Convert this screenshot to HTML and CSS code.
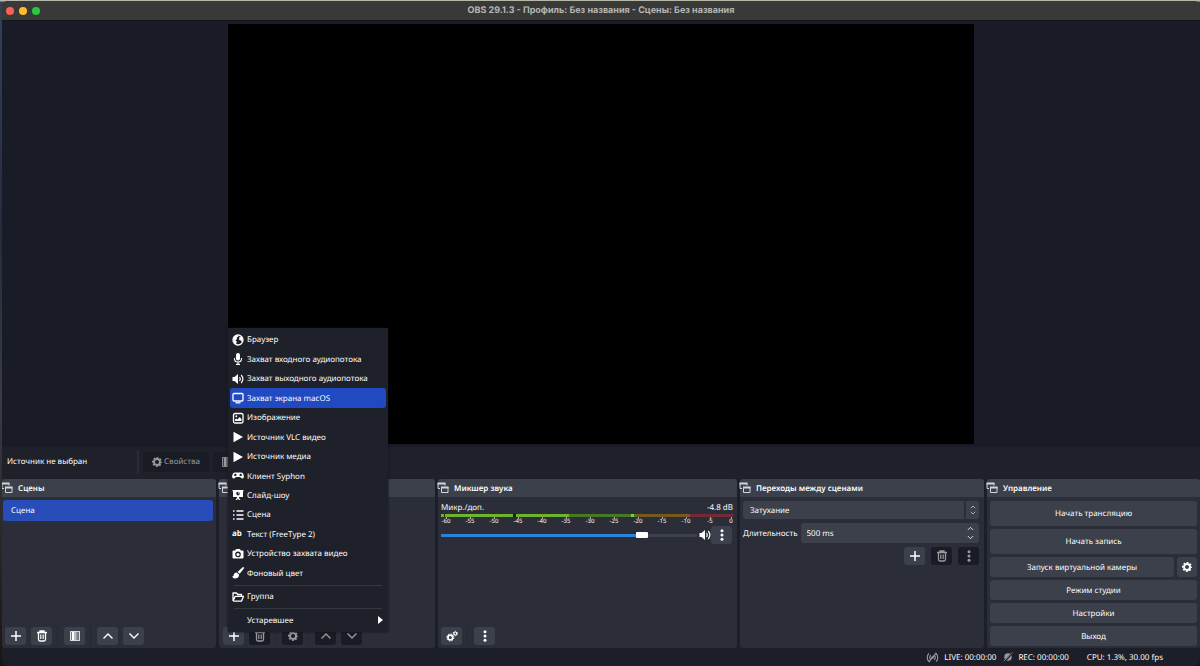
FILE: index.html
```html
<!DOCTYPE html>
<html lang="ru">
<head>
<meta charset="utf-8">
<title>OBS 29.1.3 - Профиль: Без названия - Сцены: Без названия</title>
<link rel="stylesheet" href="styles.css">
</head>
<body>
<svg class="sprite" aria-hidden="true">
  <symbol id="dock" viewBox="0 0 12 12"><path d="M1 6.500V1.500H8V3.500M1 6.500H3" fill="none" stroke="currentColor"/><path d="M.5 1.500H8.500M4 5.500H11.500" stroke="currentColor" stroke-width="2"/><path d="M4.500 5V10.500H11V5" fill="none" stroke="currentColor"/></symbol>
  <symbol id="plus" viewBox="0 0 12 12"><path d="M6 1V11M1 6H11" stroke="currentColor" stroke-width="1.500" fill="none"/></symbol>
  <symbol id="trash" viewBox="0 0 12 12"><path d="M1 2.500H11M4 2V1H8V2M2.500 3V9.500Q2.500 11 4 11H8Q9.500 11 9.500 9.500V3" stroke="currentColor" stroke-width="1.300" fill="none"/><path d="M4.500 4.500V9M6 4.500V9M7.500 4.500V9" stroke="currentColor" stroke-width=".8"/></symbol>
  <symbol id="filter" viewBox="0 0 12 12"><path d="M1 1H11V11H1Z" fill="currentColor" opacity=".3"/><path d="M1.500 1.500H10.500V10.500H1.500Z" fill="none" stroke="currentColor" opacity=".75"/><path d="M3 2H5V10H3Z" fill="currentColor"/><path d="M5 2H7V10H5Z" fill="currentColor" opacity=".5"/><path d="M7 2H8V10H7Z" fill="currentColor" opacity=".25"/></symbol>
  <symbol id="up" viewBox="0 0 12 12"><path d="M1.500 8.500L6 4L10.500 8.500" stroke="currentColor" stroke-width="1.400" fill="none"/></symbol>
  <symbol id="down" viewBox="0 0 12 12"><path d="M1.500 3.500L6 8L10.500 3.500" stroke="currentColor" stroke-width="1.400" fill="none"/></symbol>
  <symbol id="gear" viewBox="0 0 12 12"><circle cx="6" cy="6" r="3" fill="none" stroke="currentColor" stroke-width="1.900"/><circle cx="6" cy="6" r="4.300" fill="none" stroke="currentColor" stroke-width="1.400" stroke-dasharray="1.900 1.477" stroke-dashoffset=".95"/></symbol>
  <symbol id="gears" viewBox="0 0 12 12"><circle cx="4.300" cy="7.500" r="2.400" fill="none" stroke="currentColor" stroke-width="1.700"/><circle cx="4.300" cy="7.500" r="3.500" fill="none" stroke="currentColor" stroke-width="1" stroke-dasharray="1.400 1.350"/><circle cx="9.300" cy="3.500" r="1.500" fill="none" stroke="currentColor" stroke-width="1.200"/><circle cx="9.300" cy="3.500" r="2.200" fill="none" stroke="currentColor" stroke-width=".8" stroke-dasharray="1.100 1.100"/></symbol>
  <symbol id="dots" viewBox="0 0 12 12"><circle cx="6" cy="1.800" r="1.500" fill="currentColor"/><circle cx="6" cy="6" r="1.500" fill="currentColor"/><circle cx="6" cy="10.200" r="1.500" fill="currentColor"/></symbol>
  <symbol id="globe" viewBox="0 0 12 12"><circle cx="6" cy="6" r="5" fill="none" stroke="currentColor" stroke-width="1.300"/><path d="M1.500 3Q3 1 6 1.200L6.500 2.500L4.800 3.500L5 5L3.600 6.200L4.800 7.500L4 10.500Q1 9 1.500 3ZM7.500 2.800L10 3L11 6Q10.500 7.500 9.500 8L9 6.500L7 5.800Z" fill="currentColor"/></symbol>
  <symbol id="mic" viewBox="0 0 12 12"><rect x="4" y="0" width="4" height="7.500" rx="2" fill="currentColor"/><path d="M2.500 5V6Q2.500 9 6 9T9.500 6V5M6 9V11M4 11.400H8" fill="none" stroke="currentColor" stroke-width="1.100"/></symbol>
  <symbol id="sound" viewBox="0 0 12 12"><path d="M.5 4V8H2.500L6 11V1L2.500 4Z" fill="currentColor"/><path d="M7.500 4Q9 6 7.500 8M9.200 2Q12.500 6 9.200 10" fill="none" stroke="currentColor" stroke-width="1.200"/></symbol>
  <symbol id="monitor" viewBox="0 0 12 12"><rect x="1" y="1.500" width="10" height="7.500" rx="1" fill="none" stroke="currentColor" stroke-width="1.300"/><path d="M3.500 10.800H8.500" stroke="currentColor" stroke-width="1.300"/></symbol>
  <symbol id="image" viewBox="0 0 12 12"><rect x="1.500" y="1.500" width="9.500" height="9.500" rx="1.500" fill="none" stroke="currentColor" stroke-width="1.300"/><circle cx="4.300" cy="4.300" r="1" fill="currentColor"/><path d="M3 9V7.500L4.500 6.500L5.500 7.500L7.500 5L9.500 7V9Z" fill="currentColor"/></symbol>
  <symbol id="play" viewBox="0 0 12 12"><path d="M1.500 .8L11 6L1.500 11.200Z" fill="currentColor"/></symbol>
  <symbol id="gamepad" viewBox="0 0 12 12"><path fill-rule="evenodd" d="M3 2.500H9Q11.500 2.500 11.900 6.500Q11.800 9 10 8.500L8 7H4L2 8.500Q.2 9 .1 6.500Q.5 2.500 3 2.500ZM3.300 3.700A1.200 1.200 0 1 0 3.310 6.100A1.200 1.200 0 1 0 3.300 3.700ZM8.700 3.700A1.200 1.200 0 1 0 8.710 6.100A1.200 1.200 0 1 0 8.700 3.700Z" fill="currentColor"/></symbol>
  <symbol id="slides" viewBox="0 0 12 12"><path fill-rule="evenodd" d="M.5 1H11.500V2.200H11V8H7V9L8.500 11H7L6 9.700L5 11H3.500L5 9V8H1V2.200H.5ZM6 2.800A1.800 1.800 0 1 0 6.010 6.400A1.800 1.800 0 1 0 6 2.800Z" fill="currentColor"/><path d="M6 4.600V3.200A1.400 1.400 0 0 1 7.400 4.600Z" fill="currentColor"/></symbol>
  <symbol id="list" viewBox="0 0 12 12"><path d="M1 2H2.500M1 6H2.500M1 10H2.500M4.500 2H11.500M4.500 6H11.500M4.500 10H11.500" stroke="currentColor" stroke-width="1.400"/></symbol>
  <symbol id="camera" viewBox="0 0 12 12"><path fill-rule="evenodd" d="M1.500 2.500H3.300L4 1H8L8.700 2.500H10.500Q11.500 2.500 11.500 3.500V9.500Q11.500 10.500 10.500 10.500H1.500Q.5 10.500 .5 9.500V3.500Q.5 2.500 1.500 2.500ZM6 3.600A2.800 2.800 0 1 0 6.010 9.200A2.800 2.800 0 1 0 6 3.600Z" fill="currentColor"/><circle cx="6" cy="6.400" r="1.500" fill="currentColor"/></symbol>
  <symbol id="brush" viewBox="0 0 12 12"><path d="M11.800 .3Q12.300 1 11.500 2L7.700 6.800L5.500 4.900L10.300 .6Q11.200 -.2 11.800 .3ZM4.700 5.500L7 7.600Q7.300 11.500 3 11.500Q.5 11.500 .3 9.300L1.500 9Q1.600 5.500 4.700 5.500Z" fill="currentColor"/></symbol>
  <symbol id="folder" viewBox="0 0 12 12"><path d="M1 10V2H4.500L5.700 3.500H9.500V5M1 10L3.200 5.300H11.500L9.500 10.200H1.200" fill="none" stroke="currentColor" stroke-width="1.300" stroke-linejoin="round"/></symbol>
  <symbol id="live" viewBox="0 0 14 12"><path d="M3 1.500Q-.5 6 3 10.500M5 3.500Q3 6 5 8.500M11 1.500Q14.500 6 11 10.500M9 3.500Q11 6 9 8.500M3 11L11 1" fill="none" stroke="currentColor" stroke-width="1.200"/><circle cx="7" cy="6" r="1.300" fill="currentColor"/></symbol>
  <symbol id="rec" viewBox="0 0 12 12"><circle cx="6" cy="6" r="4.500" fill="currentColor"/><path d="M1.500 11.500L11.500 1" stroke="#1d1f28" stroke-width="2.400"/><path d="M1 11L11.200 .5" stroke="currentColor"/></symbol>
</svg>

<div class="app">
  <header class="titlebar">
    <div class="lights"><span class="light red"></span><span class="light yellow"></span><span class="light green"></span></div>
    <h1>OBS 29.1.3 - Профиль: Без названия - Сцены: Без названия</h1>
  </header>

  <main class="preview"><div class="canvas"></div></main>

  <section class="context">
    <span class="context-name">Источник не выбран</span>
    <button class="ghost" disabled><svg class="icon"><use href="#gear"/></svg>Свойства</button>
    <button class="ghost" disabled aria-label="Фильтры"><svg class="icon"><use href="#filter"/></svg></button>
  </section>

  <div class="docks">
    <section class="dock">
      <h2><svg class="icon"><use href="#dock"/></svg>Сцены</h2>
      <ul class="scenes"><li>Сцена</li></ul>
      <div class="tools">
        <button class="tool" aria-label="Добавить"><svg class="icon"><use href="#plus"/></svg></button>
        <button class="tool" aria-label="Удалить"><svg class="icon"><use href="#trash"/></svg></button>
        <i class="split"></i>
        <button class="tool" aria-label="Фильтры"><svg class="icon"><use href="#filter"/></svg></button>
        <i class="split"></i>
        <button class="tool" aria-label="Вверх"><svg class="icon"><use href="#up"/></svg></button>
        <button class="tool" aria-label="Вниз"><svg class="icon"><use href="#down"/></svg></button>
      </div>
    </section>

    <section class="dock sources">
      <h2><svg class="icon"><use href="#dock"/></svg></h2>
      <div class="tools">
        <button class="tool" aria-label="Добавить источник"><svg class="icon"><use href="#plus"/></svg></button>
        <button class="tool" disabled aria-label="Удалить источник"><svg class="icon"><use href="#trash"/></svg></button>
        <i class="split"></i>
        <button class="tool" disabled aria-label="Свойства источника"><svg class="icon"><use href="#gear"/></svg></button>
        <i class="split"></i>
        <button class="tool" disabled aria-label="Вверх"><svg class="icon"><use href="#up"/></svg></button>
        <button class="tool" disabled aria-label="Вниз"><svg class="icon"><use href="#down"/></svg></button>
      </div>
      <ul class="menu">
        <li><button><svg class="icon"><use href="#globe"/></svg>Браузер</button></li>
        <li><button><svg class="icon"><use href="#mic"/></svg>Захват входного аудиопотока</button></li>
        <li><button><svg class="icon"><use href="#sound"/></svg>Захват выходного аудиопотока</button></li>
        <li><button class="active"><svg class="icon"><use href="#monitor"/></svg>Захват экрана macOS</button></li>
        <li><button><svg class="icon"><use href="#image"/></svg>Изображение</button></li>
        <li><button><svg class="icon"><use href="#play"/></svg>Источник VLC видео</button></li>
        <li><button><svg class="icon"><use href="#play"/></svg>Источник медиа</button></li>
        <li><button><svg class="icon"><use href="#gamepad"/></svg>Клиент Syphon</button></li>
        <li><button><svg class="icon"><use href="#slides"/></svg>Слайд-шоу</button></li>
        <li><button><svg class="icon"><use href="#list"/></svg>Сцена</button></li>
        <li><button><b class="icon ab">ab</b>Текст (FreeType 2)</button></li>
        <li><button><svg class="icon"><use href="#camera"/></svg>Устройство захвата видео</button></li>
        <li><button><svg class="icon"><use href="#brush"/></svg>Фоновый цвет</button></li>
        <li class="rule"></li>
        <li><button><svg class="icon"><use href="#folder"/></svg>Группа</button></li>
        <li class="rule"></li>
        <li><button><span class="icon"></span>Устаревшее<i class="more"></i></button></li>
      </ul>
    </section>

    <section class="dock">
      <h2><svg class="icon"><use href="#dock"/></svg>Микшер звука</h2>
      <div class="mixer">
        <div class="channel"><label for="volume">Микр./доп.</label><span>-4.8 dB</span></div>
        <div class="meter"></div>
        <div class="scale"><span>-60</span><span>-55</span><span>-50</span><span>-45</span><span>-40</span><span>-35</span><span>-30</span><span>-25</span><span>-20</span><span>-15</span><span>-10</span><span>-5</span><span>0</span></div>
        <div class="fader">
          <input id="volume" type="range" min="0" max="100" value="80">
          <button class="mute" aria-label="Заглушить"><svg class="icon"><use href="#sound"/></svg></button>
          <button class="tool" aria-label="Параметры канала"><svg class="icon"><use href="#dots"/></svg></button>
        </div>
      </div>
      <div class="tools">
        <button class="tool" aria-label="Расширенные свойства"><svg class="icon"><use href="#gears"/></svg></button>
        <i class="split"></i>
        <button class="tool" aria-label="Меню микшера"><svg class="icon"><use href="#dots"/></svg></button>
      </div>
    </section>

    <section class="dock">
      <h2><svg class="icon"><use href="#dock"/></svg>Переходы между сценами</h2>
      <div class="transitions">
        <div class="combo">
          <select aria-label="Переход"><option>Затухание</option></select>
          <span class="arrows"><svg><use href="#up"/></svg><svg><use href="#down"/></svg></span>
        </div>
        <div class="duration">
          <label for="duration">Длительность</label>
          <div class="spin"><input id="duration" type="text" value="500 ms">
            <span class="steps"><button aria-label="Больше"><svg><use href="#up"/></svg></button><button aria-label="Меньше"><svg><use href="#down"/></svg></button></span></div>
        </div>
        <div class="actions">
          <button class="tool" aria-label="Добавить переход"><svg class="icon"><use href="#plus"/></svg></button>
          <button class="tool" disabled aria-label="Удалить переход"><svg class="icon"><use href="#trash"/></svg></button>
          <button class="tool" disabled aria-label="Свойства перехода"><svg class="icon"><use href="#dots"/></svg></button>
        </div>
      </div>
    </section>

    <section class="dock last">
      <h2><svg class="icon"><use href="#dock"/></svg>Управление</h2>
      <div class="controls">
        <button class="big">Начать трансляцию</button>
        <button class="big">Начать запись</button>
        <div class="pair"><button>Запуск виртуальной камеры</button><button aria-label="Настройка камеры"><svg class="icon"><use href="#gear"/></svg></button></div>
        <button>Режим студии</button>
        <button>Настройки</button>
        <button>Выход</button>
      </div>
    </section>
  </div>

  <footer class="status">
    <span><svg class="live"><use href="#live"/></svg>LIVE: 00:00:00</span>
    <span><svg class="rec"><use href="#rec"/></svg>REC: 00:00:00</span>
    <span class="cpu">CPU: 1.3%, 30.00 fps</span>
  </footer>
</div>
</body>
</html>
```
FILE: styles.css
```css
* { box-sizing: border-box; }
body { margin: 0; height: 100vh; padding: 1px 0 0 2px; background: linear-gradient(#b6b8a8 0 1px, #34405a 2px, #242c3e 35%, #3a3c42 60%, #1b1512); font: 8px "Noto Sans", "Open Sans", sans-serif; text-rendering: geometricPrecision; color: #fefefe; overflow: hidden; }
button, input, select { font: inherit; color: inherit; border: 0; margin: 0; padding: 0; background: none; text-rendering: inherit; }
ul { list-style: none; margin: 0; padding: 0; }
.sprite { display: none; }
svg { display: block; }
.icon { width: 12px; height: 12px; flex: none; }

.app { height: 100%; display: flex; flex-direction: column; background: #1d1f28; border-radius: 6px; overflow: hidden; }
.titlebar { height: 20px; display: grid; grid-template-columns: 1fr auto 1fr; align-items: center; background: #393937; border-bottom: 1px solid #151619; }
.titlebar h1 { margin: 0; font: bold 9px Inter, sans-serif; color: #b5b5b3; }
.lights { display: flex; gap: 5px; padding-left: 4px; }
.light { width: 8px; height: 8px; border-radius: 50%; }
.red { background: #ff5f57; }
.yellow { background: #febc2e; }
.green { background: #28c840; }

.preview { flex: 1; min-height: 0; display: flex; justify-content: center; padding: 3px 0; background: #191b26; }
.canvas { height: 100%; aspect-ratio: 16 / 9; background: #000; }

.context { height: 32px; display: flex; align-items: center; gap: 4px; padding-bottom: 3px; background: #1e2129; }
.context-name { width: 137px; height: 24px; line-height: 24px; padding-left: 5px; border-right: 2px solid #292c35; }
.ghost { height: 20px; min-width: 66px; padding: 0 8px; display: flex; align-items: center; gap: 1px; border-radius: 3px; background: #1a1c25; color: #999a9e; }

.docks { height: 169px; display: grid; grid-template-columns: 214fr 216fr 299fr 244fr 213fr; gap: 3px; }
.dock { min-width: 0; display: flex; flex-direction: column; background: #2b2e38; border-radius: 3px; }
.dock h2 { margin: 0; height: 18px; flex: none; display: flex; align-items: center; gap: 5px; font-size: 8px; font-weight: 600; background: #3c404b; border-radius: 3px 3px 0 0; }
.dock h2 .icon { color: #d4d5d8; margin-left: -1px; }
.scenes { padding: 3px 3px 0 1px; }
.scenes li { height: 21px; line-height: 21px; padding-left: 8px; background: #284cb8; border-radius: 3px; }
.tools { margin-top: auto; display: flex; gap: 5px; padding: 0 3px; margin-bottom: 3px; }
.tool { width: 21px; height: 18px; display: grid; place-items: center; background: #3c404b; border-radius: 3px; }
.tool:disabled { background: #1a1c25; color: #999a9e; }
.split { width: 2px; border-left: 1px dotted #1e2129; }

.sources { position: relative; }
.sources .tools { padding-left: 4px; }
.menu { position: absolute; left: 9px; bottom: 16px; z-index: 2; width: 160px; height: 304px; padding: 2px; display: flex; flex-direction: column; background: #1f212a; box-shadow: 0 0 2px #101116; white-space: nowrap; }
.menu li { flex: 1; display: flex; min-height: 0; }
.menu button { flex: 1; padding: 0 3px 0 2px; display: flex; align-items: center; gap: 3px; border-radius: 3px; text-align: left; }
.menu .active { background: #2149c1; }
.menu .rule { flex: 0 0 4px; margin: 0 4px; align-items: center; }
.rule::before { content: ""; flex: 1; height: 1px; background: #353842; }
.ab { font-size: 8px; line-height: 12px; }
.more { margin-left: auto; border: 4px solid transparent; border-left: 5px solid #fefefe; border-right: 0; }

.mixer { padding: 4px 4px 0 3px; }
.channel { display: flex; justify-content: space-between; line-height: 13px; }
.meter { height: 3px; background: linear-gradient(90deg, #6fb52c 0 1%, #1d2a14 1% 1.4%, #6fb52c 1.4% 24.8%, #15200e 24.8% 25.6%, #6fb52c 25.6% 44%, #467a22 44% 65%, #7fd032 65% 66%, #467a22 66% 67%, #78591d 67% 85.3%, #762a35 85.3%); }
.scale { display: flex; justify-content: space-between; font-size: 6px; }
.scale span { width: 10px; flex: none; display: flex; flex-direction: column; align-items: center; line-height: 5px; }
.scale span::before { content: ""; width: 1px; height: 2px; background: #a5a7ad; }
.scale span:last-child { width: 4px; }
.fader { display: flex; align-items: center; margin-top: 2px; padding-right: 1px; }
.fader input { flex: 1; min-width: 0; height: 6px; appearance: none; border-radius: 2px; background: linear-gradient(90deg, #2a82da 78%, #3c404b 78%) center / 100% 3px no-repeat; }
.fader input::-webkit-slider-thumb { appearance: none; width: 12px; height: 6px; border-radius: 1px; background: #fefefe; }
.mute { padding: 0 0 0 2px; }

.transitions { display: flex; flex-direction: column; gap: 4px; padding: 4px 5px 4px 3px; }
.combo { position: relative; height: 18px; }
.combo select { width: 100%; height: 100%; padding: 0 7px; appearance: none; background: #3c404b; border-radius: 3px; }
.arrows { position: absolute; top: 0; right: 0; bottom: 0; width: 15px; border-left: 2px solid #2b2e38; display: flex; flex-direction: column; align-items: center; justify-content: center; pointer-events: none; color: #d4d5d8; }
.arrows svg { width: 6px; height: 6px; }
.duration { display: flex; align-items: center; gap: 3px; }
.spin { flex: 1; min-width: 0; display: flex; height: 20px; background: #3c404b; border-radius: 3px; }
.spin input { flex: 1; min-width: 0; padding-left: 6px; }
.steps { width: 17px; display: flex; flex-direction: column; justify-content: center; gap: 2px; align-items: center; }
.steps svg { width: 7px; height: 7px; }
.actions { display: flex; justify-content: flex-end; gap: 6px; }

.controls { display: flex; flex-direction: column; gap: 3px; padding: 4px 3px 2px; }
.controls button { height: 20px; flex: none; background: #3c404b; border-radius: 3px; }
.controls .big { height: 25px; }
.pair { display: grid; grid-template-columns: 1fr 20px; gap: 3px; }
.pair button { display: grid; place-items: center; }

.status { height: 18px; display: flex; align-items: center; justify-content: flex-end; gap: 7px; padding-right: 37px; }
.status span { display: flex; align-items: center; gap: 5px; }
.status svg { color: #999a9e; }
.live { width: 13px; height: 11px; }
.rec { width: 10px; height: 10px; }
.cpu { margin-left: 11px; }
```
